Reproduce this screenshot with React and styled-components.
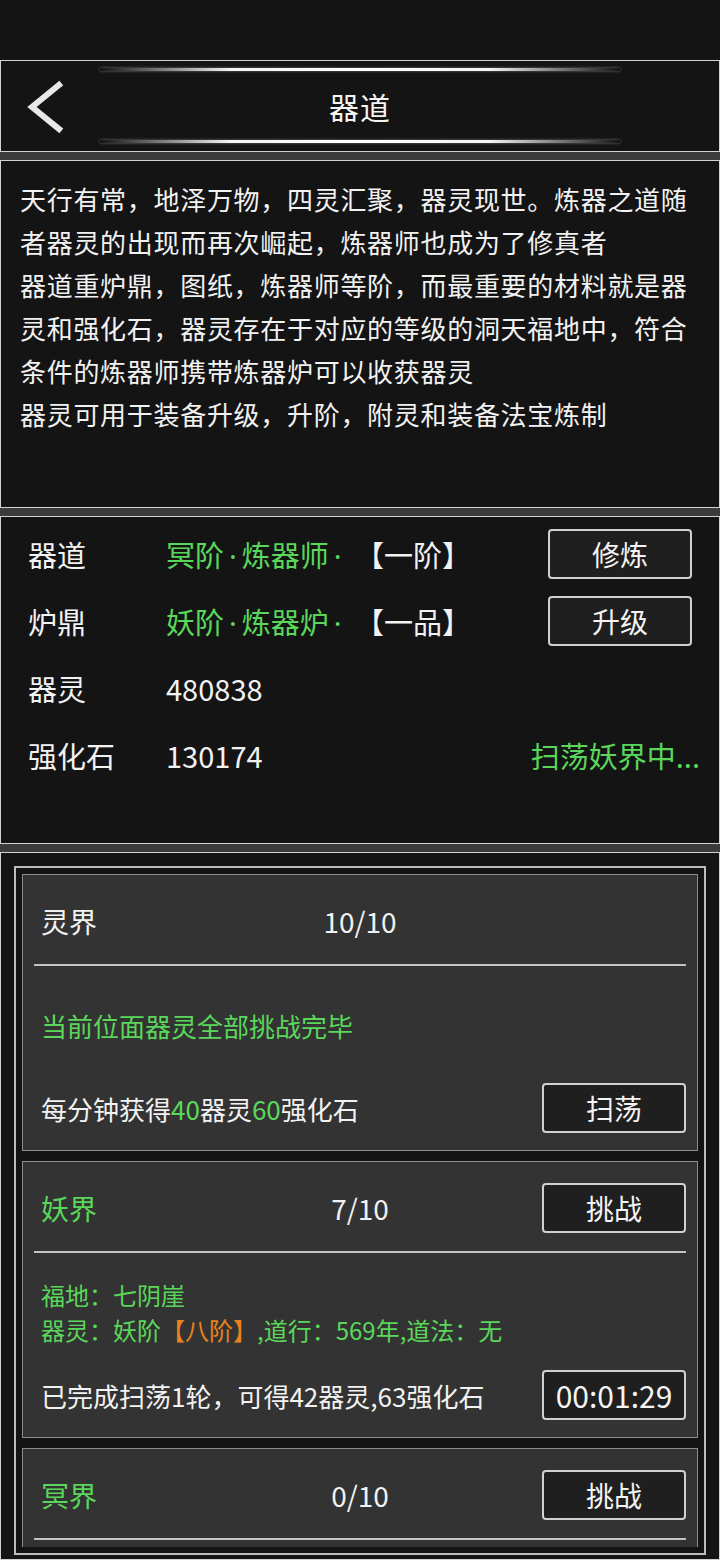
import React from 'react';
import styled, { createGlobalStyle } from 'styled-components';

const GREEN = '#5ad75a';

const GlobalStyle = createGlobalStyle`
  html, body {
    margin: 0;
    padding: 0;
    background: #141414;
  }
  body {
    font-family: 'Noto Sans CJK SC', 'Noto Sans', sans-serif;
    color: #f2f2f2;
  }
  * {
    box-sizing: border-box;
  }
`;

const Screen = styled.div`
  width: 720px;
  height: 1560px;
  overflow: hidden;
  display: flex;
  flex-direction: column;
  background: #141414;
`;

const StatusBar = styled.div`
  height: 60px;
  flex-shrink: 0;
  background: #141414;
`;

const Stack = styled.div`
  flex: 1;
  display: flex;
  flex-direction: column;
  gap: 8px;
  background: #3c3c3c;
`;

const Panel = styled.section`
  height: ${(p) => p.$h}px;
  flex-shrink: 0;
  border: 1px solid #d2d2d2;
  background: #141414;
  padding: ${(p) => p.$pad || '0'};
`;

// header
const Header = styled(Panel)`
  display: grid;
  grid-template-columns: 99px 1fr 99px;
`;

const BackButton = styled.button`
  background: none;
  border: none;
  padding: 0;
  display: flex;
  align-items: center;
  cursor: pointer;
`;

const TitleColumn = styled.div`
  display: flex;
  flex-direction: column;
  justify-content: space-between;
  align-items: center;
  padding: 7px 0 8px;
`;

const GlowLine = styled.div`
  width: 100%;
  height: 3px;
  background: linear-gradient(
    90deg,
    rgba(255, 255, 255, 0) 0%,
    rgba(255, 255, 255, 0.3) 8%,
    rgba(255, 255, 255, 0.95) 25%,
    #fff 50%,
    rgba(255, 255, 255, 0.95) 75%,
    rgba(255, 255, 255, 0.3) 92%,
    rgba(255, 255, 255, 0) 100%
  );
  box-shadow: 0 0 3px rgba(255, 255, 255, 0.4);
`;

const Title = styled.h1`
  margin: 0;
  font-size: 30px;
  font-weight: 400;
  letter-spacing: 1px;
  color: #f4f4f4;
`;

// description
const Para = styled.p`
  margin: 0;
  font-size: 26px;
  letter-spacing: 0.7px;
  line-height: 43px;
  color: #f2f2f2;
`;

// stats
const StatRow = styled.div`
  height: 67px;
  display: grid;
  grid-template-columns: 138px 1fr auto;
  align-items: center;
  font-size: 29px;
`;

const Label = styled.span`
  color: #f2f2f2;
`;

const Value = styled.span`
  color: ${(p) => (p.$green ? GREEN : '#f2f2f2')};
  white-space: nowrap;
`;

const Dot = styled.span`
  font-family: 'Noto Sans', sans-serif;
  padding: 0 5px;
`;

const Plain = styled.span`
  color: #f2f2f2;
  margin-left: 23px;
`;

const ActionButton = styled.button`
  width: 144px;
  height: 50px;
  border: 2px solid #d0d0d0;
  border-radius: 4px;
  background: #1f1f1f;
  color: #f4f4f4;
  font-family: inherit;
  font-size: ${(p) => (p.$timer ? 30 : 28)}px;
  padding: 0;
  line-height: 1;
`;

const Status = styled.span`
  color: ${GREEN};
  margin-right: -8px;
`;

// realms
const Frame = styled.div`
  height: 689px;
  border: 2px solid #bdbdbd;
  padding: 6px;
`;

const List = styled.div`
  height: 100%;
  overflow: hidden;
  display: flex;
  flex-direction: column;
  gap: 10px;
`;

const Card = styled.div`
  flex-shrink: 0;
  background: #333333;
  border: 1px solid #8c8c8c;
  padding: 0 11px;
`;

const CardHead = styled.div`
  display: grid;
  grid-template-columns: 1fr auto 1fr;
  grid-template-rows: 50px;
  align-items: center;
  padding: 21px 0 18px;
`;

const RealmName = styled.span`
  font-size: 28px;
  padding-left: 7px;
  color: ${(p) => (p.$green ? GREEN : '#f2f2f2')};
`;

const Count = styled.span`
  font-size: 28px;
  color: #f2f2f2;
`;

const HeadAction = styled.div`
  justify-self: end;
`;

const Divider = styled.div`
  height: 2px;
  background: #c4c4c4;
`;

const Notice = styled.div`
  margin: 42px 0 39px 7px;
  font-size: 26px;
  line-height: 36px;
  color: ${GREEN};
`;

const Info = styled.div`
  padding: 24px 0 0 7px;
  margin-bottom: 23px;
  font-size: 24px;
  line-height: 35px;
  color: ${GREEN};
  white-space: nowrap;
`;

const Orange = styled.span`
  color: #e8821e;
`;

const Green = styled.span`
  color: ${GREEN};
`;

const FootRow = styled.div`
  display: flex;
  align-items: center;
  justify-content: space-between;
  padding: 0 0 17px 7px;
`;

const FootText = styled.span`
  font-size: 26px;
  color: #f2f2f2;
  white-space: nowrap;
`;

const BackIcon = () => (
  <svg width="99" height="90" viewBox="0 0 99 90">
    <polyline
      points="58,24 31,46 58,68"
      fill="none"
      stroke="#e8e8e8"
      strokeWidth="6"
      strokeLinecap="square"
      strokeLinejoin="miter"
    />
  </svg>
);

const stats = [
  { label: '器道', value: ['冥阶', '炼器师'], tail: '【一阶】', action: '修炼' },
  { label: '炉鼎', value: ['妖阶', '炼器炉'], tail: '【一品】', action: '升级' },
  { label: '器灵', plain: '480838' },
  { label: '强化石', plain: '130174', status: '扫荡妖界中...' },
];

export default function App() {
  return (
    <>
      <GlobalStyle />
      <Screen>
        <StatusBar />
        <Stack>
          <Header $h={92}>
            <BackButton>
              <BackIcon />
            </BackButton>
            <TitleColumn>
              <GlowLine />
              <Title>器道</Title>
              <GlowLine />
            </TitleColumn>
            <div />
          </Header>

          <Panel $h={348} $pad="16px 19px">
            <Para>天行有常，地泽万物，四灵汇聚，器灵现世。炼器之道随者器灵的出现而再次崛起，炼器师也成为了修真者</Para>
            <Para>器道重炉鼎，图纸，炼器师等阶，而最重要的材料就是器灵和强化石，器灵存在于对应的等级的洞天福地中，符合条件的炼器师携带炼器炉可以收获器灵</Para>
            <Para>器灵可用于装备升级，升阶，附灵和装备法宝炼制</Para>
          </Panel>

          <Panel $h={328} $pad="3px 27px 0 27px">
            {stats.map((s) => (
              <StatRow key={s.label}>
                <Label>{s.label}</Label>
                {s.value ? (
                  <Value $green>
                    {s.value[0]}
                    <Dot>·</Dot>
                    {s.value[1]}
                    <Dot>·</Dot>
                    <Plain>{s.tail}</Plain>
                  </Value>
                ) : (
                  <Value>{s.plain}</Value>
                )}
                {s.action && <ActionButton>{s.action}</ActionButton>}
                {s.status && <Status>{s.status}</Status>}
              </StatRow>
            ))}
          </Panel>

          <Panel $h={708} $pad="13px">
            <Frame>
              <List>
                <Card>
                  <CardHead>
                    <RealmName>灵界</RealmName>
                    <Count>10/10</Count>
                    <HeadAction />
                  </CardHead>
                  <Divider />
                  <Notice>当前位面器灵全部挑战完毕</Notice>
                  <FootRow>
                    <FootText>
                      每分钟获得<Green>40</Green>器灵<Green>60</Green>强化石
                    </FootText>
                    <ActionButton>扫荡</ActionButton>
                  </FootRow>
                </Card>

                <Card>
                  <CardHead>
                    <RealmName $green>妖界</RealmName>
                    <Count>7/10</Count>
                    <HeadAction>
                      <ActionButton>挑战</ActionButton>
                    </HeadAction>
                  </CardHead>
                  <Divider />
                  <Info>
                    <div>福地：七阴崖</div>
                    <div>
                      器灵：妖阶<Orange>【八阶】</Orange>,道行：569年,道法：无
                    </div>
                  </Info>
                  <FootRow>
                    <FootText>已完成扫荡1轮，可得42器灵,63强化石</FootText>
                    <ActionButton $timer>00:01:29</ActionButton>
                  </FootRow>
                </Card>

                <Card>
                  <CardHead>
                    <RealmName $green>冥界</RealmName>
                    <Count>0/10</Count>
                    <HeadAction>
                      <ActionButton>挑战</ActionButton>
                    </HeadAction>
                  </CardHead>
                  <Divider />
                  <Notice>&nbsp;</Notice>
                </Card>
              </List>
            </Frame>
          </Panel>
        </Stack>
      </Screen>
    </>
  );
}
